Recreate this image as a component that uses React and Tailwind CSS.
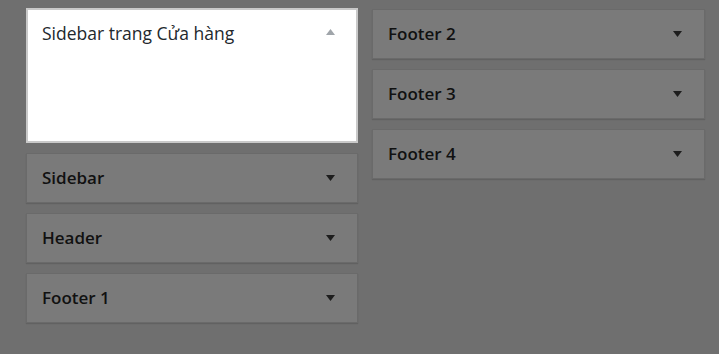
const LEFT = ['Sidebar', 'Header', 'Footer 1'];
const RIGHT = ['Footer 2', 'Footer 3', 'Footer 4'];

function Caret({ up = false, className = '' }) {
  return (
    <svg width="9" height="6" viewBox="0 0 9 6" className={className}>
      {up ? <path d="M0 6 L4.5 0 L9 6 Z" fill="currentColor" /> : <path d="M0 0 L9 0 L4.5 6 Z" fill="currentColor" />}
    </svg>
  );
}

function ClosedBox({ title }) {
  return (
    <div className="flex h-[50px] items-center justify-between border border-[#6a6a6a] bg-[#7a7a7a] pl-[15px] pr-[22px] shadow-[0_1px_1px_rgba(0,0,0,0.12)]">
      <span className="text-[17px] font-semibold text-[#111]">{title}</span>
      <Caret className="text-[#1e1e1e]" />
    </div>
  );
}

export default function App() {
  return (
    <div
      className="flex h-[354px] w-[719px] gap-[14px] bg-[#6f6f6f] pl-[26px]"
      style={{ fontFamily: '"Open Sans", "Noto Sans", sans-serif' }}
    >
      <div className="flex w-[332px] flex-col gap-[10px] pt-[8px]">
        <div className="h-[135px] border-2 border-[#c9c9c9] bg-white pl-[14px] pr-[21px] pt-[10px]">
          <div className="flex items-center justify-between">
            <span className="text-[17.5px] text-[#23282d]">Sidebar trang Cửa hàng</span>
            <Caret up className="mt-[-3px] text-[#a0a5aa]" />
          </div>
        </div>
        {LEFT.map((t) => (
          <ClosedBox key={t} title={t} />
        ))}
      </div>
      <div className="flex w-[333px] flex-col gap-[10px] pt-[9px]">
        {RIGHT.map((t) => (
          <ClosedBox key={t} title={t} />
        ))}
      </div>
    </div>
  );
}
